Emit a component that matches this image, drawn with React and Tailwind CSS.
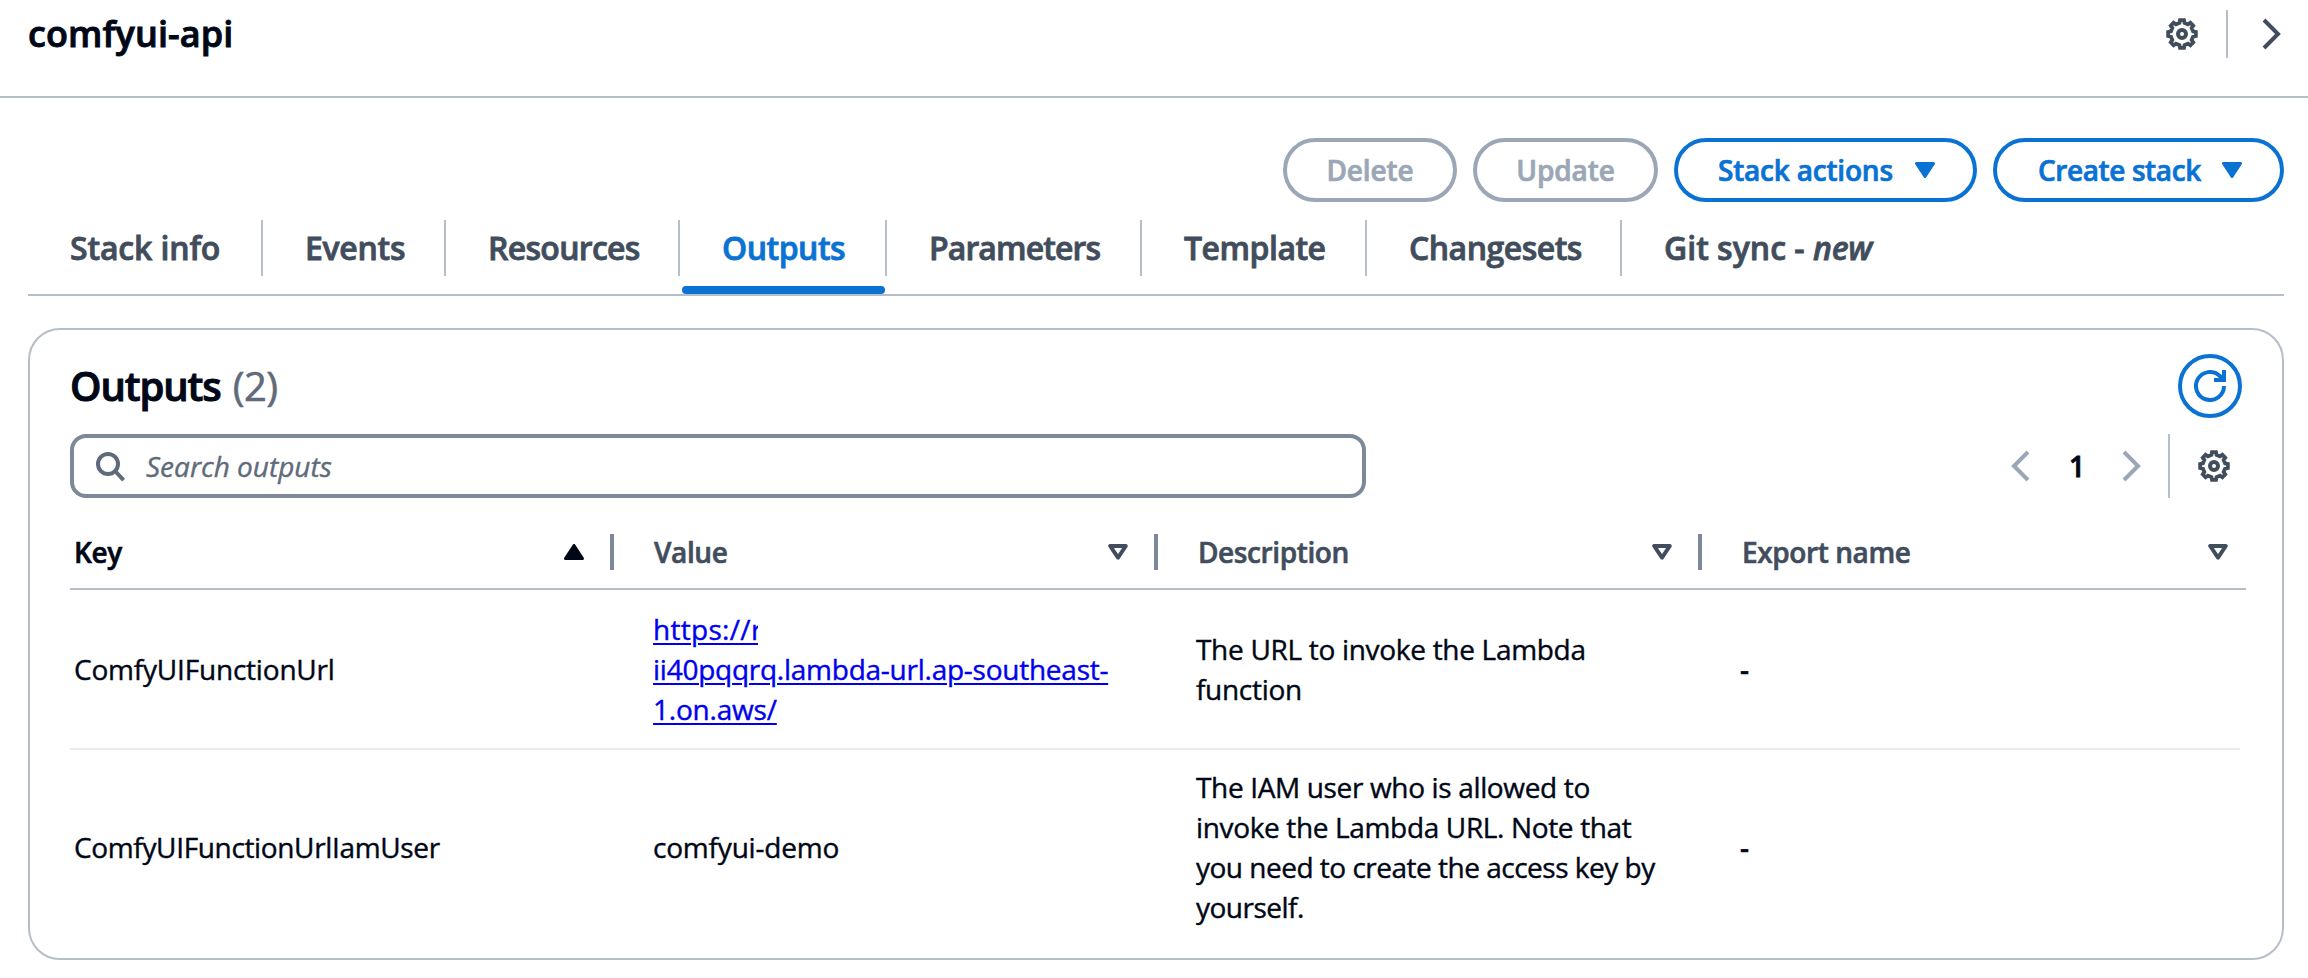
const GEAR_PATH = (() => {
  const pts = [];
  for (let i = 0; i < 8; i++) {
    const a = i * 45;
    [[5.7, -13], [7, -8.2], [7, 8.2], [5.7, 13]].forEach(([r, d]) => {
      const t = ((a + d) * Math.PI) / 180;
      pts.push(`${(8 + r * Math.cos(t)).toFixed(2)} ${(8 + r * Math.sin(t)).toFixed(2)}`);
    });
  }
  return `M${pts.join("L")}Z`;
})();

function Icon({ children, className = "" }) {
  return (
    <svg viewBox="0 0 16 16" fill="none" stroke="currentColor" strokeWidth="2" className={`block size-8 shrink-0 ${className}`}>
      {children}
    </svg>
  );
}

const Gear = ({ className }) => (
  <Icon className={className}>
    <path d={GEAR_PATH} strokeWidth="1.9" />
    <circle cx="8" cy="8" r="2" />
  </Icon>
);
const ChevronRight = ({ className }) => <Icon className={className}><path d="m4 1 7 7-7 7" /></Icon>;
const ChevronLeft = ({ className }) => <Icon className={className}><path d="M11 1 4 8l7 7" /></Icon>;
const Search = ({ className }) => (
  <Icon className={className}>
    <circle cx="7" cy="7" r="5" />
    <path d="m10.5 10.5 4.3 4.6" />
  </Icon>
);
const Refresh = () => (
  <Icon>
    <path d="M15 8A7 7 0 1 1 12.9 3L15 5" />
    <path d="M15 0v5h-5" />
  </Icon>
);

function Triangle({ up, hollow, className = "" }) {
  return (
    <svg viewBox="0 0 20 16" fill={hollow ? "none" : "currentColor"} stroke="currentColor" strokeLinejoin="round" className={`block h-4 w-5 shrink-0 ${className}`}>
      {hollow ? (
        <path d="M2.2 2h15.6L10 13.6Z" strokeWidth="4" />
      ) : (
        <path d={up ? "M10 1.5 1.5 14.5h17Z" : "M10 14.5 1.5 1.5h17Z"} strokeWidth="3" />
      )}
    </svg>
  );
}

const TABS = [
  { label: "Stack info", box: "w-[235px] tracking-[-0.15px]" },
  { label: "Events", box: "w-[183px] tracking-[-0.3px]" },
  { label: "Resources", box: "w-[234px] tracking-[-0.7px]" },
  { label: "Outputs", box: "w-[207px] tracking-[-0.5px]", active: true },
  { label: "Parameters", box: "w-[255px] tracking-[-0.9px]" },
  { label: "Template", box: "w-[225px] tracking-[-0.5px]" },
  { label: "Changesets", box: "w-[255px] tracking-[-0.5px]" },
];

const COLUMNS = [
  { label: "Key", sorted: true, box: "pl-1 pr-[26px]" },
  { label: "Value", box: "pl-10 pr-[26px]" },
  { label: "Description", box: "pl-10 pr-[26px]" },
  { label: "Export name", box: "pl-10 pr-[18px]", last: true },
];

export default function App() {
  return (
    <div className="h-[978px] w-[2308px] overflow-hidden bg-white font-['Open_Sans','Noto_Sans',sans-serif] text-[28px] leading-10 text-[#000716] [-webkit-text-stroke-width:0.4px]">
      <header className="flex h-[98px] items-start justify-between border-b-2 border-[#b6bec9] pt-2.5 pr-5 pl-7">
        <h1 className="h-12 text-[36px] leading-[48px] font-semibold tracking-[0.1px] [-webkit-text-stroke-width:0.9px]">comfyui-api</h1>
        <div className="flex h-12 items-center text-[#414d5c]">
          <Gear />
          <span className="mr-7 ml-7 h-12 w-0.5 bg-[#b6bec9]" />
          <ChevronRight />
        </div>
      </header>

      <main className="px-7 pr-6 pt-10">
        <div className="flex justify-end gap-4 font-semibold [-webkit-text-stroke-width:0.7px]">
          <button className="flex h-16 w-[174px] items-center justify-center rounded-full border-4 border-[#9ba7b6] tracking-[-0.1px] text-[#9ba7b6]">Delete</button>
          <button className="flex h-16 w-[185px] items-center justify-center rounded-full border-4 border-[#9ba7b6] tracking-[-0.1px] text-[#9ba7b6]">Update</button>
          <button className="flex h-16 w-[303px] items-center justify-between rounded-full border-4 border-[#0972d3] pr-[38px] pl-[40px] tracking-[-0.2px] whitespace-nowrap text-[#0972d3]">
            Stack actions
            <Triangle />
          </button>
          <button className="flex h-16 w-[291px] items-center justify-between rounded-full border-4 border-[#0972d3] pr-[38px] pl-[41px] tracking-[-0.4px] whitespace-nowrap text-[#0972d3]">
            Create stack
            <Triangle />
          </button>
        </div>

        <nav className="mt-[18px] flex h-[76px] border-b-2 border-[#b6bec9] text-[32px] font-semibold text-[#414d5c] [-webkit-text-stroke-width:0.8px]">
          {TABS.map((t) => (
            <div key={t.label} className={`relative flex h-14 shrink-0 items-center border-r-2 border-[#b6bec9] pl-[42px] ${t.box} ${t.active ? "text-[#0972d3]" : ""}`}>
              {t.label}
              {t.active && <span className="absolute top-[66px] left-0.5 h-2 w-[203px] rounded-[4px] bg-[#0972d3]" />}
            </div>
          ))}
          <div className="flex h-14 items-center pl-[42px] whitespace-pre">
            <span className="tracking-[0px]">Git sync - </span>
            <em className="tracking-[-0.2px]">new</em>
          </div>
        </nav>

        <section className="mt-8 h-[632px] rounded-[32px] border-2 border-[#b6bec9] pt-6 pr-9 pl-10">
          <div className="flex h-16 items-center justify-between pr-1">
            <h2 className="flex text-[40px] leading-[48px]">
              <span className="font-semibold tracking-[-1.1px] [-webkit-text-stroke-width:1px]">Outputs</span>
              <span className="pl-3 tracking-[-0.5px] text-[#5f6b7a] [-webkit-text-stroke-width:0.6px]">(2)</span>
            </h2>
            <button className="flex size-16 items-center justify-center rounded-full border-4 border-[#0972d3] text-[#0972d3]">
              <Refresh />
            </button>
          </div>

          <div className="mt-4 flex h-16 items-center justify-between pr-4">
            <div className="flex h-16 w-[1296px] items-center rounded-[16px] border-4 border-[#7d8998] pl-5 text-[#5f6b7a]">
              <Search />
              <span className="pl-5 italic">Search outputs</span>
            </div>
            <div className="flex h-16 items-center">
              <ChevronLeft className="text-[#9ba7b6]" />
              <span className="w-[78px] text-center font-semibold [-webkit-text-stroke-width:0.8px]">1</span>
              <ChevronRight className="text-[#9ba7b6]" />
              <span className="mr-7 ml-5 h-16 w-0.5 bg-[#b6bec9]" />
              <Gear className="text-[#414d5c]" />
            </div>
          </div>

          <div className="mt-4 grid h-[76px] grid-cols-4 items-center border-b-2 border-[#b6bec9] pt-0.5 font-semibold tracking-[-0.4px] [-webkit-text-stroke-width:0.6px]">
            {COLUMNS.map((c) => (
              <div key={c.label} className={`flex h-9 items-center justify-between ${c.box} ${c.last ? "" : "border-r-4 border-[#7d8998]"} ${c.sorted ? "text-[#000716]" : "text-[#414d5c]"}`}>
                {c.label}
                <Triangle up={c.sorted} hollow={!c.sorted} />
              </div>
            ))}
          </div>

          <div className="mr-1.5 grid h-[160px] grid-cols-[544px_544px_544px_1fr] items-center border-b-2 border-[#e9ebed]">
            <div className="pl-1 tracking-[-0.2px]">ComfyUIFunctionUrl</div>
            <div className="pl-[39px] text-[#0000ee]">
              <div className="w-[105px] overflow-hidden tracking-[0.3px] whitespace-nowrap underline decoration-2 underline-offset-[3px]">https://r</div>
              <div className="tracking-[-0.25px] whitespace-nowrap underline decoration-2 underline-offset-[3px]">ii40pqqrq.lambda-url.ap-southeast-</div>
              <div className="tracking-[-0.2px] whitespace-nowrap underline decoration-2 underline-offset-[3px]">1.on.aws/</div>
            </div>
            <div className="pl-[38px] tracking-[-0.3px] whitespace-nowrap">
              The URL to invoke the Lambda<br />function
            </div>
            <div className="pl-[38px] font-semibold">-</div>
          </div>

          <div className="mr-1.5 grid h-[194px] grid-cols-[544px_544px_544px_1fr] items-center">
            <div className="pl-1 tracking-[-0.35px]">ComfyUIFunctionUrlIamUser</div>
            <div className="pl-[39px] tracking-[-0.2px]">comfyui-demo</div>
            <div className="pl-[38px] tracking-[-0.5px] whitespace-nowrap">
              <div className="tracking-[-0.35px]">The IAM user who is allowed to<br />invoke the Lambda URL. Note that</div>
              you need to create the access key by<br />yourself.
            </div>
            <div className="pl-[38px] font-semibold">-</div>
          </div>
        </section>
      </main>
    </div>
  );
}
